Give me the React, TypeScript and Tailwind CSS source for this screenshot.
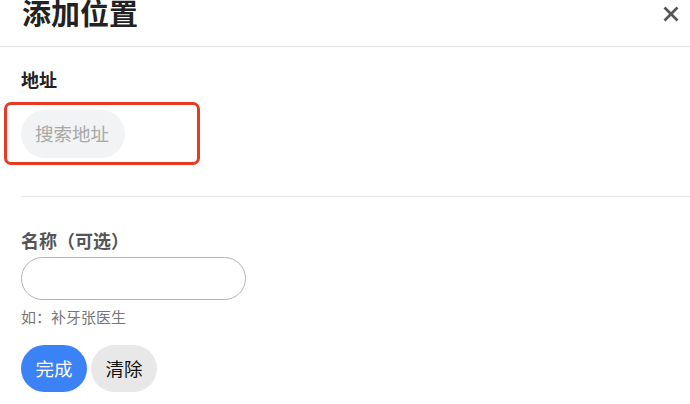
const App = () => {
    return (
        <div className="w-[690px] h-[404px] overflow-hidden bg-white font-['Noto_Sans_CJK_SC',sans-serif]">
            {/* header */}
            <div className="h-[47px] border-b border-[#e3e3e3] flex justify-between items-start pl-[22px] pr-[11px]">
                <h1 className="text-[29px] leading-[28px] font-bold text-[#222] mt-[-2px]">添加位置</h1>
                <button className="mt-[6px] w-4 h-4">
                    <svg viewBox="0 0 16 16" className="w-4 h-4" fill="none" stroke="#555" strokeWidth="2.6">
                        <line x1="1.5" y1="1.5" x2="14.5" y2="14.5" />
                        <line x1="14.5" y1="1.5" x2="1.5" y2="14.5" />
                    </svg>
                </button>
            </div>

            <div className="pl-[21px]">
                <div className="mt-[20px] text-[18px] leading-[24px] font-bold text-[#222]">地址</div>

                <div className="mt-[19px] relative w-[104px]">
                    <div className="h-[48px] w-[104px] pl-[14px] rounded-full bg-[#f2f3f5] text-[18.5px] text-[#a8a8a8] flex items-center">
                        搜索地址
                    </div>
                    {/* highlight */}
                    <div className="absolute -left-[17px] -top-[8px] w-[196px] h-[63px] border-[3px] border-[#e63b22] rounded-[7px] pointer-events-none"></div>
                </div>

                <div className="mt-[38px] h-px bg-[#e6e6e6]"></div>

                <div className="mt-[31px] text-[18px] leading-[24px] font-bold text-[#555]">名称（可选）</div>
                <input
                    className="mt-[5px] block w-[225px] h-[43px] rounded-full border border-[#b3b3b3] px-4 outline-none"
                />
                <div className="mt-[7px] text-[15px] leading-[20px] text-[#777]">如：补牙张医生</div>

                <div className="mt-[18px] flex gap-[4px]">
                    <button className="h-[47px] w-[66px] rounded-full bg-[#3b82f6] text-white text-[18.5px]">完成</button>
                    <button className="h-[47px] w-[66px] rounded-full bg-[#e8e8e8] text-[#111] text-[18.5px]">清除</button>
                </div>
            </div>
        </div>
    );
};

export default App;
